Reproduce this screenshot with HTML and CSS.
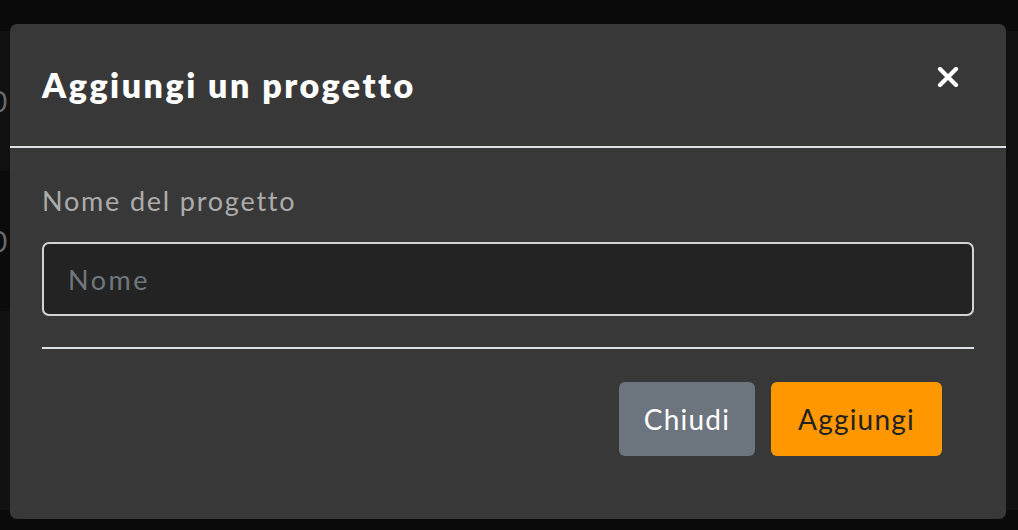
FILE: index.html
```html
<!DOCTYPE html>
<html lang="it">
<head>
<meta charset="utf-8">
<title>Aggiungi un progetto</title>
<link rel="stylesheet" href="styles.css">
</head>
<body>
<div class="page">
  <div class="panel">
    <div class="bg-row bg-row-first"><span class="bg-num">0</span></div>
    <div class="bg-row bg-row-second"><span class="bg-num">0</span></div>
  </div>
</div>

<div class="modal">
  <div class="modal-header">
    <h5 class="modal-title">Aggiungi un progetto</h5>
    <button class="btn-close" aria-label="Chiudi">
      <svg width="22" height="20" viewBox="0 0 22 20"><path d="M3 2 L19 18 M19 2 L3 18" stroke="#fff" stroke-width="4.2" stroke-linecap="round"/></svg>
    </button>
  </div>
  <div class="modal-body">
    <label class="form-label" for="nome">Nome del progetto</label>
    <input class="form-control" id="nome" type="text" placeholder="Nome">
    <hr class="divider">
    <div class="actions">
      <button class="btn btn-secondary">Chiudi</button>
      <button class="btn btn-primary">Aggiungi</button>
    </div>
  </div>
</div>
</body>
</html>
```

FILE: styles.css
```css
* { box-sizing: border-box; }
html, body { margin: 0; padding: 0; }
body {
  width: 1018px;
  height: 530px;
  overflow: hidden;
  background: #0a0a0a;
  font-family: Lato, "Noto Sans", sans-serif;
  position: relative;
}
.page { padding-top: 31px; height: 530px; }
.panel {
  height: 479px;
  display: flex;
  flex-direction: column;
  background: #111111;
}
.bg-row { display: flex; align-items: center; }
.bg-row-first { height: 140px; background: #101010; }
.bg-row-second { height: 140px; background: #0b0b0b; width: 500px; }
.bg-num {
  font-size: 28px;
  color: #6a6a6a;
  margin-left: -9px;
}

.modal {
  position: absolute;
  left: 10px;
  top: 24px;
  width: 996px;
  height: 495px;
  background: #383838;
  border-radius: 7px;
  display: flex;
  flex-direction: column;
}
.modal-header {
  height: 124px;
  border-bottom: 2px solid #dee2e6;
  display: flex;
  align-items: center;
  justify-content: space-between;
  padding: 0 47px 0 32px;
}
.modal-title {
  margin: 0;
  color: #ffffff;
  font-size: 34px;
  font-weight: 800;
  letter-spacing: 2.5px;
  line-height: 1;
}
.btn-close {
  background: none;
  border: 0;
  padding: 0;
  width: 22px;
  height: 20px;
  margin-top: -17px;
  display: flex;
  cursor: pointer;
}
.modal-body {
  padding: 37px 32px 0 32px;
  display: flex;
  flex-direction: column;
}
.form-label {
  color: #acacac;
  font-size: 27px;
  line-height: 32px;
  font-weight: 400;
  letter-spacing: 1.8px;
}
.form-control {
  margin-top: 25px;
  height: 74px;
  width: 100%;
  background: #232323;
  border: 2px solid #d4d4d4;
  border-radius: 7px;
  padding: 0 24px;
  font-family: inherit;
  font-size: 27px;
  font-weight: 400;
  letter-spacing: 2.5px;
  color: #ddd;
  outline: none;
}
.form-control::placeholder { color: #6f777f; }
.divider {
  margin: 31px 0 0 0;
  border: 0;
  border-top: 2px solid #dee2e6;
  height: 0;
}
.actions {
  display: flex;
  justify-content: flex-end;
  gap: 16px;
  padding-right: 32px;
  margin-top: 33px;
}
.btn {
  height: 74px;
  border: 0;
  border-radius: 6px;
  font-family: inherit;
  font-size: 28px;
  font-weight: 400;
  letter-spacing: 1.2px;
  padding: 0;
  cursor: pointer;
}
.btn-secondary { background: #6c757d; color: #ffffff; width: 136px; }
.btn-primary { background: #ff9800; color: #222222; width: 171px; }
```
